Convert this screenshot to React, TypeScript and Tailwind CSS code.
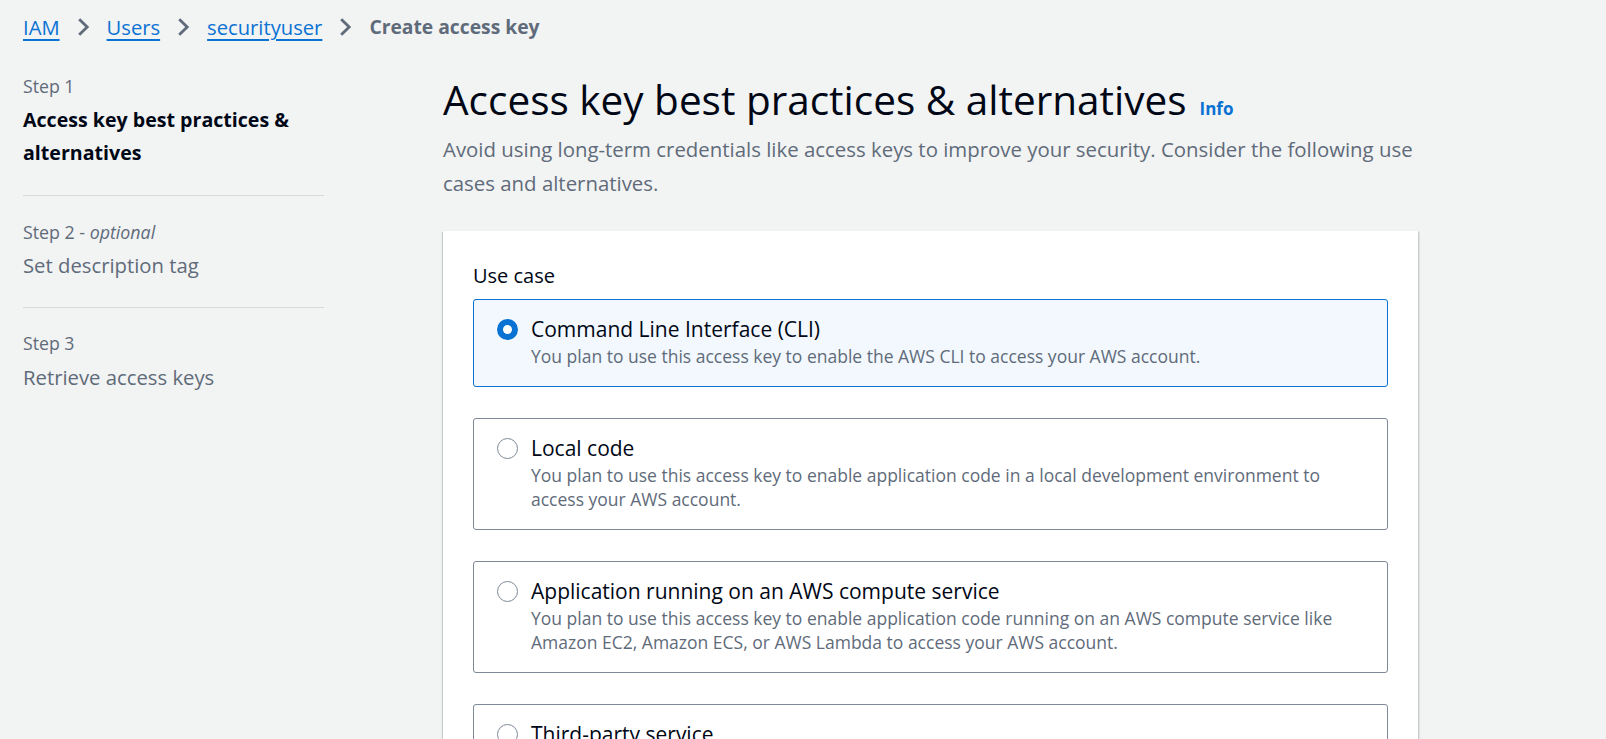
type UseCase = {
	title: string
	description: string
}

const useCases: UseCase[] = [
	{
		title: "Command Line Interface (CLI)",
		description:
			"You plan to use this access key to enable the AWS CLI to access your AWS account.",
	},
	{
		title: "Local code",
		description:
			"You plan to use this access key to enable application code in a local development environment to access your AWS account.",
	},
	{
		title: "Application running on an AWS compute service",
		description:
			"You plan to use this access key to enable application code running on an AWS compute service like Amazon EC2, Amazon ECS, or AWS Lambda to access your AWS account.",
	},
	{
		title: "Third-party service",
		description:
			"You plan to use this access key to enable access for a third-party application or service that monitors or manages your AWS resources.",
	},
	{
		title: "Application running outside AWS",
		description:
			"You plan to use this access key to authenticate workloads running in your data center or other infrastructure outside of AWS that needs to access your AWS resources.",
	},
]

function Chevron() {
	return (
		<svg
			width="13"
			height="20"
			viewBox="0 0 13 20"
			className="mx-[17px] shrink-0"
			fill="none"
		>
			<path
				d="M2.2 2.2l8 7.8-8 7.8"
				stroke="#5f6b7a"
				strokeWidth="2.8"
				strokeLinejoin="miter"
			/>
		</svg>
	)
}

function Breadcrumbs() {
	return (
		<nav className="flex h-[54px] items-center pl-[23px]">
			<a className="text-[20.2px] text-[#0972d3] underline decoration-[1.5px] underline-offset-[4px]">
				IAM
			</a>
			<Chevron />
			<a className="text-[20.2px] text-[#0972d3] underline decoration-[1.5px] underline-offset-[4px]">
				Users
			</a>
			<Chevron />
			<a className="text-[20.2px] text-[#0972d3] underline decoration-[1.5px] underline-offset-[4px]">
				securityuser
			</a>
			<Chevron />
			<span className="text-[19.3px] font-bold text-[#5f6b7a]">Create access key</span>
		</nav>
	)
}

function Steps() {
	return (
		<aside className="ml-[23px] w-[301px] shrink-0 pt-[20px]">
			<div className="text-[17.7px] leading-[24px] text-[#5f6b7a]">Step 1</div>
			<div className="mt-[6px] text-[19.6px] font-bold leading-[32.5px] text-[#000716]">
				Access key best practices & alternatives
			</div>
			<div className="mb-[24px] mt-[26px] border-t border-[#d5dbdb]" />
			<div className="text-[17.8px] leading-[24px] text-[#5f6b7a]">
				Step 2 - <i>optional</i>
			</div>
			<div className="mt-[5px] text-[20.3px] leading-[32.5px] text-[#5f6b7a]">
				Set description tag
			</div>
			<div className="mb-[23px] mt-[25px] border-t border-[#d5dbdb]" />
			<div className="text-[17.7px] leading-[24px] text-[#5f6b7a]">Step 3</div>
			<div className="mt-[6px] text-[20.3px] leading-[32.5px] text-[#5f6b7a]">
				Retrieve access keys
			</div>
		</aside>
	)
}

function UseCaseOption({ item, selected }: { item: UseCase; selected: boolean }) {
	return (
		<div
			className={`flex rounded-[3px] border pb-[18px] pl-[23px] pr-[23px] pt-[14px] ${
				selected ? "border-[#0972d3] bg-[#f2f8fd]" : "border-[#7d8998] bg-white"
			}`}
		>
			<div className="flex h-[30px] shrink-0 items-center">
				{selected ? (
					<div className="h-[21px] w-[21px] rounded-full border-[6.5px] border-[#0972d3] bg-white" />
				) : (
					<div className="h-[21px] w-[21px] rounded-full border-[1.6px] border-[#7d8998] bg-white" />
				)}
			</div>
			<div className="ml-[13px]">
				<div className="text-[21px] leading-[30px] text-[#000716]">{item.title}</div>
				<div className="text-[17.5px] leading-[24px] text-[#5f6b7a]">
					{item.description}
				</div>
			</div>
		</div>
	)
}

export default function App() {
	return (
		<div className="min-h-screen bg-[#f2f3f3] font-['Open_Sans',sans-serif]">
			<Breadcrumbs />
			<div className="flex">
				<Steps />
				<main className="ml-[119px] w-[975px] shrink-0 pt-[22px]">
					<div className="flex items-baseline">
						<h1 className="text-[40.5px] leading-[48px] text-[#000716]">
							Access key best practices & alternatives
						</h1>
						<a className="ml-[13px] text-[17px] font-bold text-[#0972d3]">Info</a>
					</div>
					<p className="mt-[8px] text-[20.4px] leading-[34px] text-[#5f6b7a]">
						Avoid using long-term credentials like access keys to improve your
						security. Consider the following use cases and alternatives.
					</p>
					<section className="mt-[31px] bg-white px-[30px] pb-[30px] pt-[30px] shadow-[0_1px_1px_0_rgba(0,28,36,0.3),1px_1px_2px_0_rgba(0,28,36,0.2),-1px_1px_1px_0_rgba(0,28,36,0.12)]">
						<div className="text-[20px] leading-[30px] text-[#000716]">Use case</div>
						<div className="mt-[8px] flex flex-col gap-[31px]">
							{useCases.map((item, i) => (
								<UseCaseOption key={item.title} item={item} selected={i === 0} />
							))}
						</div>
					</section>
				</main>
			</div>
		</div>
	)
}
